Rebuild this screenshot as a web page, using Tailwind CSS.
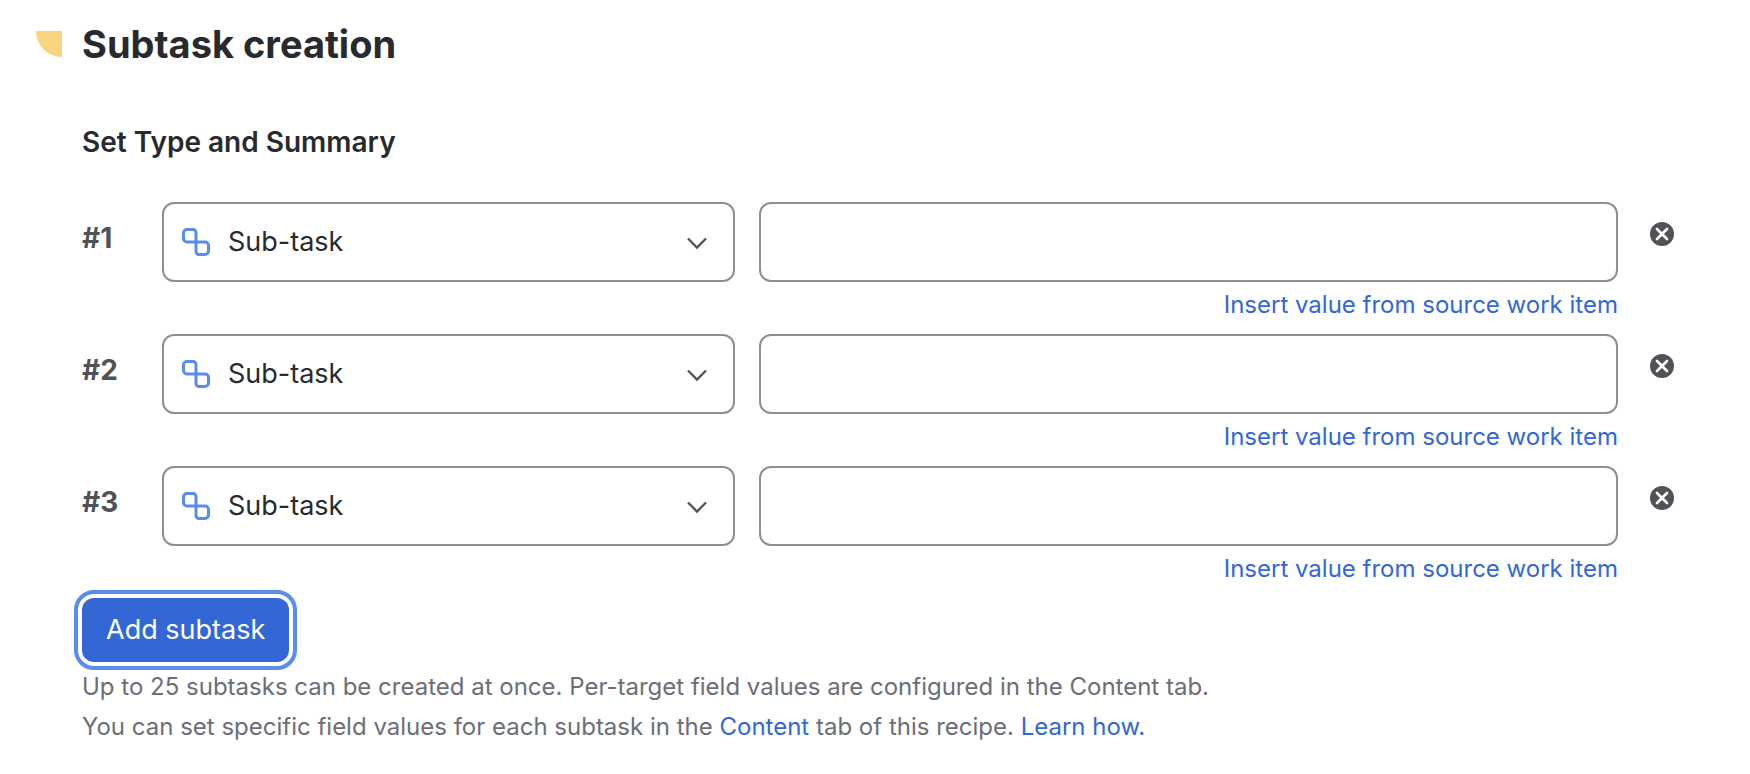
<!DOCTYPE html>
<html lang="en">

<head>
    <meta charset="UTF-8">
    <meta name="viewport" content="width=device-width, initial-scale=1.0">
    <title>Subtask creation</title>
    <script src="https://cdn.jsdelivr.net/npm/@tailwindcss/browser@4"></script>
</head>

<body class="bg-white font-['Inter',sans-serif] text-[#292a2e]">
    <main class="pt-5 pb-6 pl-9 pr-[76px]">
        <header class="flex items-center gap-5">
            <span class="size-[26px] rounded-bl-full bg-[#f7d57f]"></span>
            <h1 class="text-[38px] leading-[48px] font-bold">Subtask creation</h1>
        </header>

        <section class="pl-[46px]">
            <h2 class="mt-[58px] mb-11 text-[28px] leading-8 font-semibold">Set Type and Summary</h2>

            <!-- Subtask rows -->
            <div class="flex items-start">
                <label for="type-1" class="flex h-[72px] w-20 items-center text-[28px] font-bold text-[#505258]">#1</label>
                <div class="grid flex-1 grid-cols-[2fr_3fr] items-start gap-6">
                    <div class="relative">
                        <select id="type-1" class="block h-20 w-full appearance-none rounded-xl border-2 border-[#8c8f97] bg-white px-16 text-[27px]">
                            <option>Sub-task</option>
                        </select>
                        <svg class="pointer-events-none absolute left-5 top-[26px]" width="28" height="28" viewBox="0 0 28 28" fill="none" stroke="#5a8cec" stroke-width="3">
                            <path d="M14 14H5a3.500 3.500 0 0 1-3.500-3.500V5A3.500 3.500 0 0 1 5 1.500h6A3 3 0 0 1 14 4.500z"></path>
                            <path d="M14 14h9a3.500 3.500 0 0 1 3.500 3.500V23a3.500 3.500 0 0 1-3.500 3.500h-6A3 3 0 0 1 14 23.500z"></path>
                        </svg>
                        <svg class="pointer-events-none absolute right-7 top-[34px]" width="20" height="14" viewBox="0 0 20 14" fill="none" stroke="#505258" stroke-width="2.300">
                            <path d="M1 2.500L10 11.500L19 2.500"></path>
                        </svg>
                    </div>
                    <div class="flex flex-col items-end pb-2.5">
                        <input type="text" aria-label="Summary 1" class="h-20 w-full rounded-xl border-2 border-[#8c8f97] bg-white px-4 text-[27px]">
                        <a href="#" class="mt-1 text-[24px] leading-[38px] text-[#3267d5]">Insert value from source work item</a>
                    </div>
                </div>
                <button type="button" aria-label="Remove subtask 1" class="ml-8 flex h-16 items-center">
                    <svg width="24" height="24" viewBox="0 0 24 24">
                        <circle cx="12" cy="12" r="12" fill="#505258"></circle>
                        <path d="M7 7L17 17M17 7L7 17" stroke="#fff" stroke-width="2.700" stroke-linecap="round"></path>
                    </svg>
                </button>
            </div>

            <div class="flex items-start">
                <label for="type-2" class="flex h-[72px] w-20 items-center text-[28px] font-bold text-[#505258]">#2</label>
                <div class="grid flex-1 grid-cols-[2fr_3fr] items-start gap-6">
                    <div class="relative">
                        <select id="type-2" class="block h-20 w-full appearance-none rounded-xl border-2 border-[#8c8f97] bg-white px-16 text-[27px]">
                            <option>Sub-task</option>
                        </select>
                        <svg class="pointer-events-none absolute left-5 top-[26px]" width="28" height="28" viewBox="0 0 28 28" fill="none" stroke="#5a8cec" stroke-width="3">
                            <path d="M14 14H5a3.500 3.500 0 0 1-3.500-3.500V5A3.500 3.500 0 0 1 5 1.500h6A3 3 0 0 1 14 4.500z"></path>
                            <path d="M14 14h9a3.500 3.500 0 0 1 3.500 3.500V23a3.500 3.500 0 0 1-3.500 3.500h-6A3 3 0 0 1 14 23.500z"></path>
                        </svg>
                        <svg class="pointer-events-none absolute right-7 top-[34px]" width="20" height="14" viewBox="0 0 20 14" fill="none" stroke="#505258" stroke-width="2.300">
                            <path d="M1 2.500L10 11.500L19 2.500"></path>
                        </svg>
                    </div>
                    <div class="flex flex-col items-end pb-2.5">
                        <input type="text" aria-label="Summary 2" class="h-20 w-full rounded-xl border-2 border-[#8c8f97] bg-white px-4 text-[27px]">
                        <a href="#" class="mt-1 text-[24px] leading-[38px] text-[#3267d5]">Insert value from source work item</a>
                    </div>
                </div>
                <button type="button" aria-label="Remove subtask 2" class="ml-8 flex h-16 items-center">
                    <svg width="24" height="24" viewBox="0 0 24 24">
                        <circle cx="12" cy="12" r="12" fill="#505258"></circle>
                        <path d="M7 7L17 17M17 7L7 17" stroke="#fff" stroke-width="2.700" stroke-linecap="round"></path>
                    </svg>
                </button>
            </div>

            <div class="flex items-start">
                <label for="type-3" class="flex h-[72px] w-20 items-center text-[28px] font-bold text-[#505258]">#3</label>
                <div class="grid flex-1 grid-cols-[2fr_3fr] items-start gap-6">
                    <div class="relative">
                        <select id="type-3" class="block h-20 w-full appearance-none rounded-xl border-2 border-[#8c8f97] bg-white px-16 text-[27px]">
                            <option>Sub-task</option>
                        </select>
                        <svg class="pointer-events-none absolute left-5 top-[26px]" width="28" height="28" viewBox="0 0 28 28" fill="none" stroke="#5a8cec" stroke-width="3">
                            <path d="M14 14H5a3.500 3.500 0 0 1-3.500-3.500V5A3.500 3.500 0 0 1 5 1.500h6A3 3 0 0 1 14 4.500z"></path>
                            <path d="M14 14h9a3.500 3.500 0 0 1 3.500 3.500V23a3.500 3.500 0 0 1-3.500 3.500h-6A3 3 0 0 1 14 23.500z"></path>
                        </svg>
                        <svg class="pointer-events-none absolute right-7 top-[34px]" width="20" height="14" viewBox="0 0 20 14" fill="none" stroke="#505258" stroke-width="2.300">
                            <path d="M1 2.500L10 11.500L19 2.500"></path>
                        </svg>
                    </div>
                    <div class="flex flex-col items-end pb-2.5">
                        <input type="text" aria-label="Summary 3" class="h-20 w-full rounded-xl border-2 border-[#8c8f97] bg-white px-4 text-[27px]">
                        <a href="#" class="mt-1 text-[24px] leading-[38px] text-[#3267d5]">Insert value from source work item</a>
                    </div>
                </div>
                <button type="button" aria-label="Remove subtask 3" class="ml-8 flex h-16 items-center">
                    <svg width="24" height="24" viewBox="0 0 24 24">
                        <circle cx="12" cy="12" r="12" fill="#505258"></circle>
                        <path d="M7 7L17 17M17 7L7 17" stroke="#fff" stroke-width="2.700" stroke-linecap="round"></path>
                    </svg>
                </button>
            </div>

            <button type="button" class="block h-16 rounded-xl bg-[#3267d5] px-6 text-[27px] text-white outline-4 outline-offset-4 outline-[#5a8cec]">Add subtask</button>

            <div class="mt-[5px] text-[24px] leading-10 text-[#6b6e76]">
                <p>Up to 25 subtasks can be created at once. Per-target field values are configured in the Content tab.</p>
                <p>You can set specific field values for each subtask in the <a href="#" class="text-[#3267d5]">Content</a> tab of this recipe. <a href="#" class="text-[#3267d5]">Learn how.</a></p>
            </div>
        </section>
    </main>
</body>

</html>
